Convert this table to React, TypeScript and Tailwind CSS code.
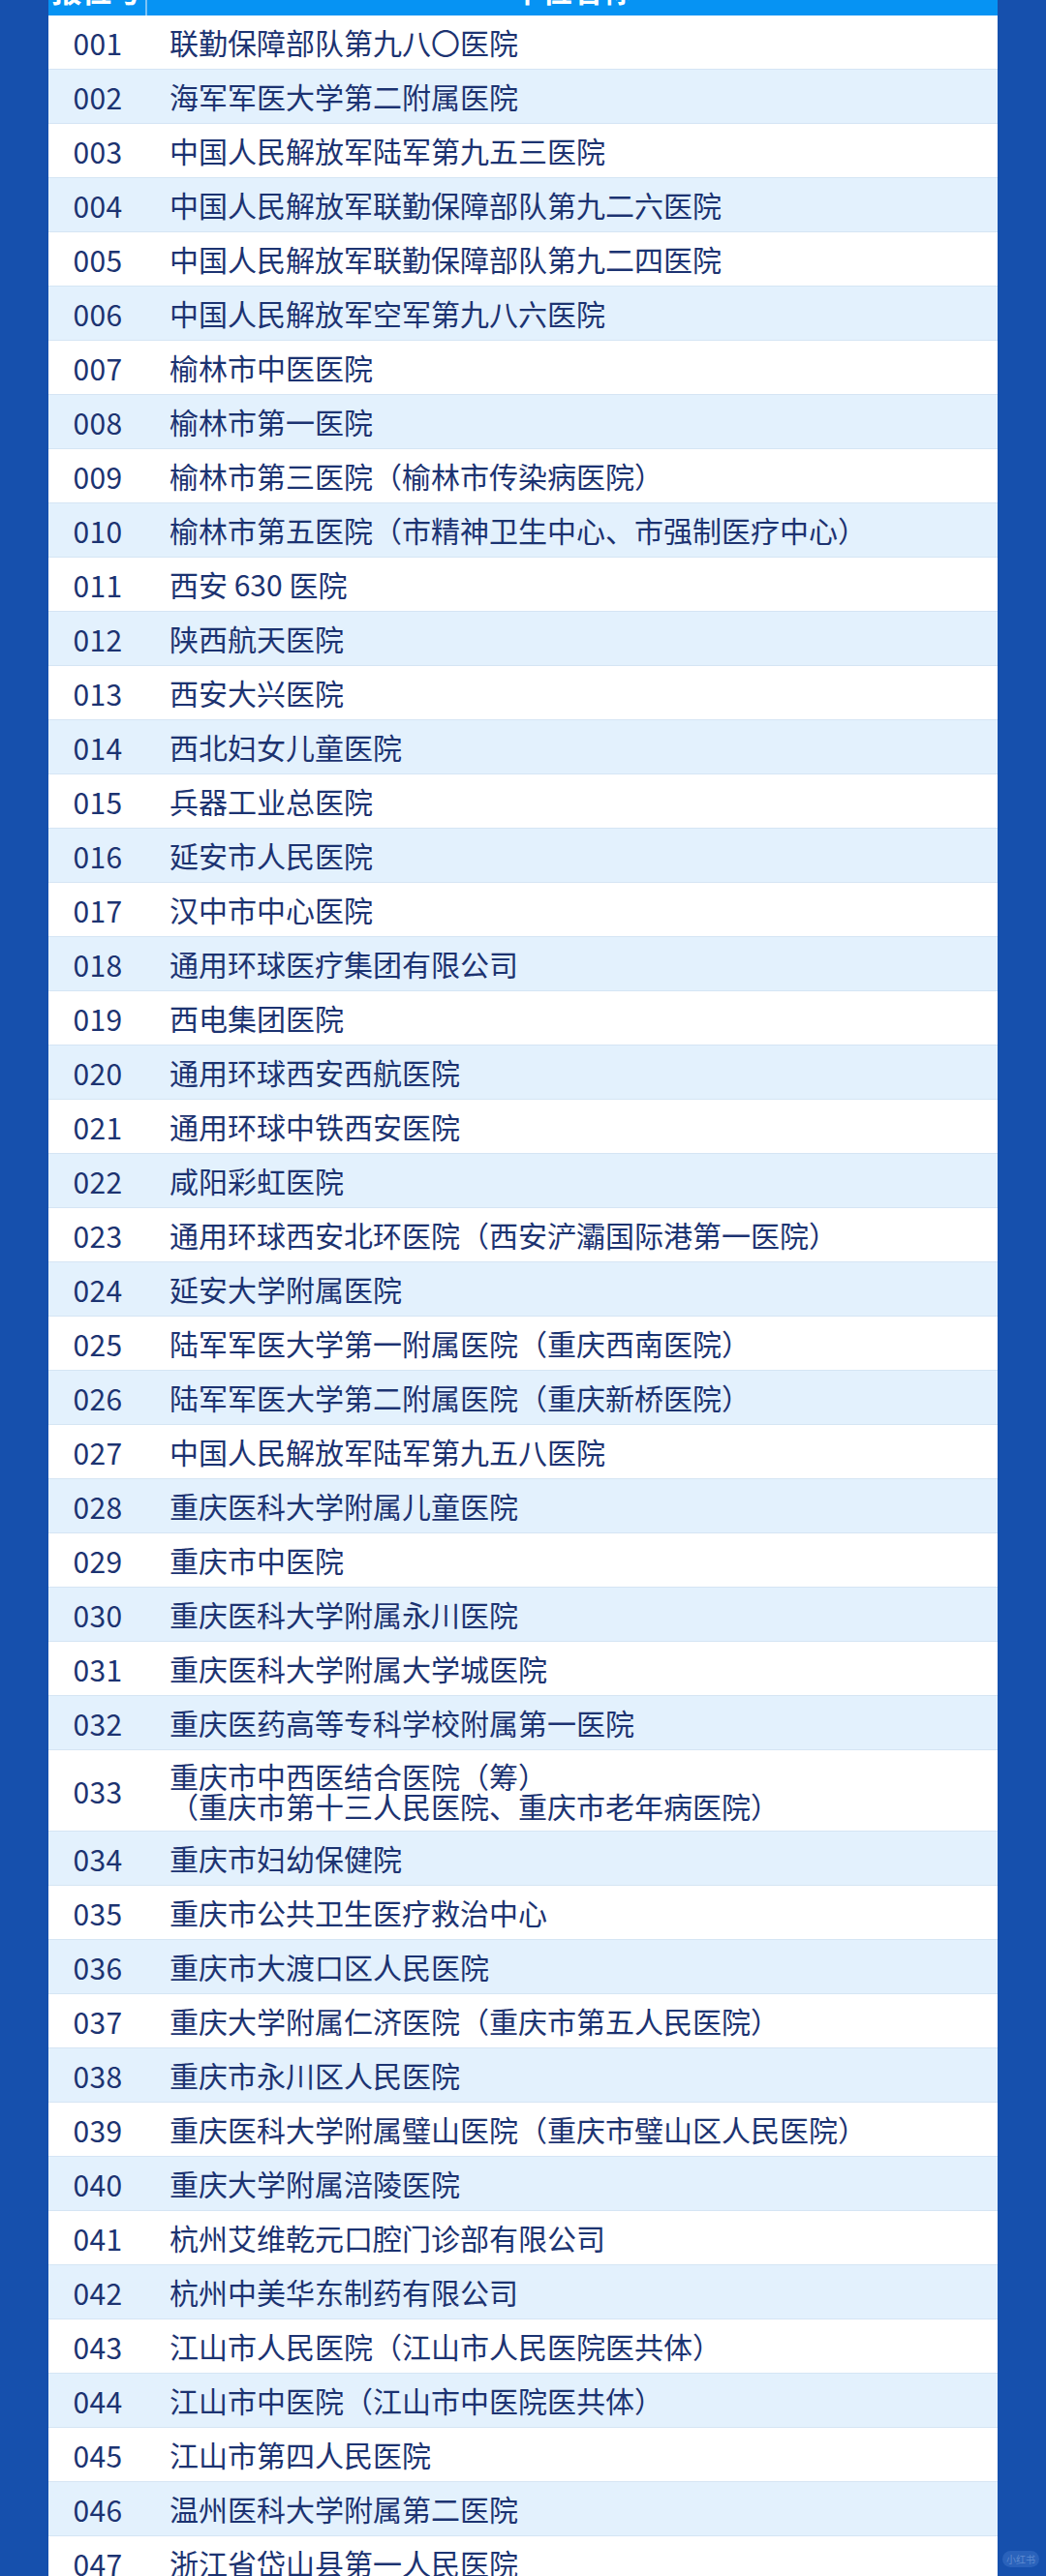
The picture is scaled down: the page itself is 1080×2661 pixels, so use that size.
import React from "react";

const rows: { id: string; name: string; name2?: string }[] = [
  { id: "001", name: "联勤保障部队第九八〇医院" },
  { id: "002", name: "海军军医大学第二附属医院" },
  { id: "003", name: "中国人民解放军陆军第九五三医院" },
  { id: "004", name: "中国人民解放军联勤保障部队第九二六医院" },
  { id: "005", name: "中国人民解放军联勤保障部队第九二四医院" },
  { id: "006", name: "中国人民解放军空军第九八六医院" },
  { id: "007", name: "榆林市中医医院" },
  { id: "008", name: "榆林市第一医院" },
  { id: "009", name: "榆林市第三医院（榆林市传染病医院）" },
  { id: "010", name: "榆林市第五医院（市精神卫生中心、市强制医疗中心）" },
  { id: "011", name: "西安 630 医院" },
  { id: "012", name: "陕西航天医院" },
  { id: "013", name: "西安大兴医院" },
  { id: "014", name: "西北妇女儿童医院" },
  { id: "015", name: "兵器工业总医院" },
  { id: "016", name: "延安市人民医院" },
  { id: "017", name: "汉中市中心医院" },
  { id: "018", name: "通用环球医疗集团有限公司" },
  { id: "019", name: "西电集团医院" },
  { id: "020", name: "通用环球西安西航医院" },
  { id: "021", name: "通用环球中铁西安医院" },
  { id: "022", name: "咸阳彩虹医院" },
  { id: "023", name: "通用环球西安北环医院（西安浐灞国际港第一医院）" },
  { id: "024", name: "延安大学附属医院" },
  { id: "025", name: "陆军军医大学第一附属医院（重庆西南医院）" },
  { id: "026", name: "陆军军医大学第二附属医院（重庆新桥医院）" },
  { id: "027", name: "中国人民解放军陆军第九五八医院" },
  { id: "028", name: "重庆医科大学附属儿童医院" },
  { id: "029", name: "重庆市中医院" },
  { id: "030", name: "重庆医科大学附属永川医院" },
  { id: "031", name: "重庆医科大学附属大学城医院" },
  { id: "032", name: "重庆医药高等专科学校附属第一医院" },
  {
    id: "033",
    name: "重庆市中西医结合医院（筹）",
    name2: "（重庆市第十三人民医院、重庆市老年病医院）",
  },
  { id: "034", name: "重庆市妇幼保健院" },
  { id: "035", name: "重庆市公共卫生医疗救治中心" },
  { id: "036", name: "重庆市大渡口区人民医院" },
  { id: "037", name: "重庆大学附属仁济医院（重庆市第五人民医院）" },
  { id: "038", name: "重庆市永川区人民医院" },
  { id: "039", name: "重庆医科大学附属璧山医院（重庆市璧山区人民医院）" },
  { id: "040", name: "重庆大学附属涪陵医院" },
  { id: "041", name: "杭州艾维乾元口腔门诊部有限公司" },
  { id: "042", name: "杭州中美华东制药有限公司" },
  { id: "043", name: "江山市人民医院（江山市人民医院医共体）" },
  { id: "044", name: "江山市中医院（江山市中医院医共体）" },
  { id: "045", name: "江山市第四人民医院" },
  { id: "046", name: "温州医科大学附属第二医院" },
  { id: "047", name: "浙江省岱山县第一人民医院" },
];

export default function App() {
  return (
    <div className="relative w-[1080px] h-[2661px] overflow-hidden bg-[#1650ad] font-['Noto_Sans_CJK_SC','Noto_Sans',sans-serif] text-[#1c3371]">
      <div className="mx-[50px] flex flex-col">
        {/* header */}
        <div className="-mt-[40px] flex h-[56px] bg-[#0693f3] text-white font-bold text-[31px]">
          <div className="w-[102px] flex items-center justify-center border-r-2 border-[#7cc3f6] leading-none">
            报位号
          </div>
          <div className="flex-1 flex items-center justify-center leading-none">
            单位名称
          </div>
        </div>
        {rows.map((r, i) => (
          <div
            key={r.id}
            className={
              (i % 2 === 0 ? "bg-white " : "bg-[#e3f1fd] ") +
              (r.name2 ? "h-[84px] " : "h-[56px] ") +
              "flex items-center border-b border-[#d5e5f4]"
            }
          >
            <div className="w-[102px] text-center text-[30px] leading-none tracking-[0.3px]">
              {r.id}
            </div>
            <div className="flex-1 pl-[23px] text-[30px] leading-[31px] whitespace-nowrap">
              <div>{r.name}</div>
              {r.name2 && <div>{r.name2}</div>}
            </div>
          </div>
        ))}
      </div>
      {/* watermark */}
      <div className="absolute left-[1035px] top-[2635px] w-[38px] h-[17px] rounded-full bg-[#2a62bb] flex items-center justify-center text-[10px] leading-none text-[#5f8bd0]">
        小红书
      </div>
    </div>
  );
}
